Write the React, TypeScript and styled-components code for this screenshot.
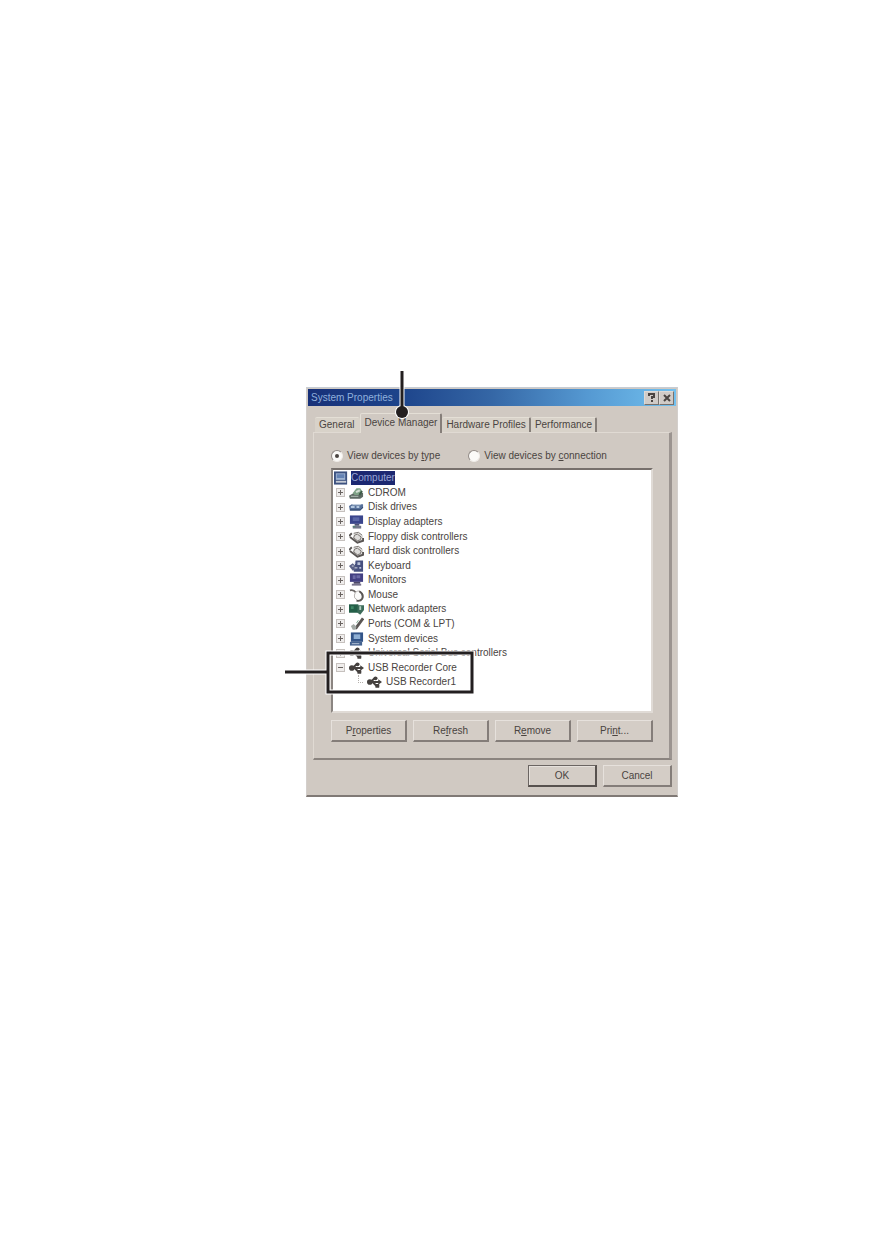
import React, { useState } from "react";
import styled, { createGlobalStyle, css } from "styled-components";

const GlobalStyle = createGlobalStyle`
  * { box-sizing: border-box; }
  body {
    margin: 0;
    background: #ffffff;
    color: #4a4441;
    font-family: "Liberation Sans", Arial, sans-serif;
    font-size: 10px;
    line-height: 12px;
  }
`;

const Page = styled.main`
  display: grid;
  grid-template-columns: minmax(0, 306fr) minmax(372px, 372fr) minmax(0, 215fr);
  min-height: 100vh;
  padding: 387px 0 64px;
`;

const Figure = styled.div`
  grid-column: 2;
  position: relative;
  align-self: start;
`;

const Dialog = styled.section`
  background: #d0c9c2;
  border: 1px solid #d3cfcc;
  border-top-color: #c5ccd5;
  border-bottom: 2px solid #807975;
  padding: 1px 1px 8px;
`;

const TitleBar = styled.header`
  display: flex;
  align-items: center;
  height: 17px;
  padding: 0 2px 0 3px;
  background: linear-gradient(90deg, #173078 0%, #1d448b 25%, #3567a6 50%, #5599d2 76%, #72c0ee 100%);
`;

const Title = styled.h1`
  flex: 1;
  margin: 0;
  font-size: 10px;
  font-weight: 400;
  color: #8fb0dc;
`;

const CaptionButton = styled.button`
  display: grid;
  place-items: center;
  width: 15px;
  height: 14px;
  padding: 0;
  color: #4a4441;
  background: #d0cbc7;
  border: 1px solid;
  border-color: #dedad6 #77716d #77716d #dedad6;
`;

const Body = styled.div`
  padding: 7px 4px 0 5px;
`;

const TabStrip = styled.div`
  display: flex;
  align-items: flex-end;
  height: 19px;
  padding-left: 2px;
`;

const Tab = styled.button<{ $active?: boolean }>`
  height: 15px;
  padding: 0 3px 0 4px;
  font: inherit;
  color: inherit;
  background: #d8d2c9;
  border: 0 solid;
  border-color: #e4dfd6 #857e79 transparent #e4dfd6;
  border-top-width: 1px;
  border-right-width: 2px;
  border-radius: 2px 2px 0 0;
  white-space: nowrap;
  &:first-child {
    border-right-color: #d8d2c9;
  }
  ${(p) =>
    p.$active &&
    css`
      position: relative;
      height: 20px;
      padding-bottom: 2px;
      margin-bottom: -1px;
      background: #d0c9c2;
      border-left-width: 1px;
    `}
`;

const Panel = styled.div`
  padding: 16px 16px 16px 17px;
  border: 1px solid #e0dad3;
  border-right: 3px solid #9b9490;
  border-bottom: 2px solid #8b847f;
`;

const Choices = styled.div`
  display: flex;
  gap: 28px;
  height: 13px;
  margin-bottom: 6px;
`;

const Choice = styled.label`
  display: flex;
  align-items: center;
  gap: 4px;
  white-space: nowrap;
`;

const Radio = styled.input`
  appearance: none;
  display: grid;
  place-items: center;
  width: 12px;
  height: 12px;
  margin: 0;
  background: #fbfaf8;
  border: 1px solid;
  border-color: #928b87 #f0ece8 #f0ece8 #928b87;
  border-radius: 50%;
  &:checked::before {
    content: "";
    width: 4px;
    height: 4px;
    background: #4a4441;
    border-radius: 50%;
  }
`;

const ListBox = styled.div`
  min-height: 243px;
  padding: 1px 1px 21px 1px;
  background: #ffffff;
  border: 2px solid;
  border-color: #77706c #e0dbd6 #e0dbd6 #8b8581;
`;

const Tree = styled.ul`
  display: grid;
  grid-auto-rows: 1fr;
  height: 219px;
  margin: 0;
  padding: 0;
  list-style: none;
`;

const Node = styled.li<{ $level: number }>`
  display: flex;
  align-items: center;
  gap: ${(p) => (p.$level === 0 ? 2 : 4)}px;
  padding-left: ${(p) => [0, 2, 24][p.$level]}px;
  white-space: nowrap;
`;

const Expander = styled.button`
  display: grid;
  place-items: center;
  width: 9px;
  height: 9px;
  padding: 0;
  color: #6a6461;
  background: #efedec;
  border: 1px solid #c6c1be;
`;

const Branch = styled.span`
  width: 5px;
  height: 8px;
  margin-bottom: 7px;
  border-left: 1px dotted #b5b0ac;
  border-bottom: 1px dotted #b5b0ac;
`;

const NodeLabel = styled.span<{ $selected?: boolean }>`
  ${(p) =>
    p.$selected &&
    css`
      padding: 1px 0;
      color: #98a4d4;
      background: #1c2871;
    `}
`;

const Actions = styled.div`
  display: grid;
  grid-template-columns: repeat(4, 1fr);
  gap: 6px;
  margin-top: 7px;
`;

const Footer = styled.footer`
  display: flex;
  justify-content: flex-end;
  gap: 6px;
  margin-top: 5px;
`;

const Button = styled.button<{ $default?: boolean; $wide?: boolean }>`
  width: ${(p) => (p.$wide ? "auto" : "69px")};
  height: 22px;
  padding: 0;
  font: inherit;
  color: inherit;
  background: #d4cdc6;
  border: 1px solid;
  border-color: #e6e1dc #847d79 #847d79 #e6e1dc;
  border-right-width: 2px;
  border-bottom-width: 2px;
  ${(p) =>
    p.$default &&
    css`
      border-color: #6b6562 #57514e #57514e #6b6562;
      box-shadow: inset 1px 1px #e6e1dc;
    `}
`;

const ink = "#231f20";

const TabPointer = styled.svg`
  position: absolute;
  left: 88px;
  top: -16px;
  width: 15px;
  height: 50px;
  pointer-events: none;
`;

const RowPointer = styled.svg`
  position: absolute;
  left: -21px;
  top: 263px;
  width: 190px;
  height: 45px;
  pointer-events: none;
`;

type IconName =
  | "computer" | "cdrom" | "drive" | "display" | "controller" | "keyboard"
  | "monitor" | "mouse" | "network" | "port" | "system" | "usb";

const shapes: Record<IconName, React.ReactNode> = {
  computer: (
    <>
      <path d="M0 0h14v14H0z" fill="#3d5280" />
      <path d="M2 2h10v7H2z" fill="#9fb4d2" />
      <path d="M3 3h8v4H3z" fill="#6583b4" />
      <path d="M2 10h11v2H2z" fill="#c7ccd5" />
    </>
  ),
  cdrom: (
    <>
      <path d="M0 10l5-3h10v4l-3 2H1z" fill="#5d6963" />
      <path d="M2 10h8v1H2z" fill="#b9c7bd" />
      <path d="M4 7l4-5h4l2 3-3 4H6z" fill="#7ea286" />
      <path d="M7 5l4-2 1 2-4 2z" fill="#d3dfd4" />
      <path d="M11 9l3-4" stroke="#3d5a47" strokeWidth="2" />
    </>
  ),
  drive: (
    <>
      <path d="M0 6l3-2h12v4l-3 3H1z" fill="#56709a" />
      <path d="M2 6h4v2H2zM8 6h3v2H8z" fill="#b4c8df" />
      <path d="M4 4h9l-1 1H3z" fill="#dbe5ee" />
      <path d="M1 10h11l3-3" fill="none" stroke="#33476b" />
    </>
  ),
  display: (
    <>
      <path d="M1 0h14v9H1z" fill="#3a458c" />
      <path d="M4 2h7v4H4z" fill="#5b68a8" />
      <path d="M6 9h5v2H6z" fill="#4d5375" />
      <path d="M4 11h9v3H4z" fill="#73778b" />
      <path d="M4 12h3" stroke="#4d8a6c" />
    </>
  ),
  controller: (
    <>
      <path d="M5 3l5-1 5 4v5l-6 2-5-4z" fill="#dedddb" />
      <path d="M5 3l5-1 4 3M6 5l3-1 4 3-1 3-3 1-4-3z" fill="none" stroke="#77736f" />
      <path d="M0 6l3-3M1 7l8 6 6-2V8" fill="none" stroke="#5a5654" strokeWidth="2" />
    </>
  ),
  keyboard: (
    <>
      <path d="M7 1h8v12H5z" fill="#46507f" />
      <path d="M9 3h3v3H9zM11 8h2v2h-2z" fill="#b7bfd8" />
      <path d="M0 7l4-3 3 3v4l-3 1z" fill="#596087" />
      <path d="M3 7h2M6 9h3M5 4h2" stroke="#dde0e9" />
    </>
  ),
  monitor: (
    <>
      <path d="M1 0h14v9H1z" fill="#423f82" />
      <path d="M4 2h3v4H4zM8 2h4v3H8z" fill="#6b6aa6" />
      <path d="M5 9h7v2H5z" fill="#4d4968" />
      <path d="M3 11h10v2H3z" fill="#77738b" />
    </>
  ),
  mouse: (
    <>
      <path d="M1 2q4-1 6 2" fill="none" stroke="#6a6664" strokeWidth="2" />
      <path d="M7 4q4-3 7 1t-1 8q-4 1-7-3-1-3 1-6z" fill="#fbfbfa" stroke="#b3afac" />
      <path d="M11 3q5 3 3 8-2 3-6 2" fill="none" stroke="#5a5654" strokeWidth="2" />
    </>
  ),
  network: (
    <>
      <path d="M0 2h10v9H0z" fill="#245f48" />
      <path d="M2 4h3v3H2z" fill="#3f8766" />
      <path d="M9 3h7v5l-4 5-3-2z" fill="#3d6c5a" />
      <path d="M11 4h2v4h-2z" fill="#b4cfc2" />
    </>
  ),
  port: (
    <>
      <path d="M15 1L7 12" stroke="#5a5654" strokeWidth="3" />
      <path d="M2 9l3-2 3 3-1 3H4z" fill="#a3aaa6" />
      <path d="M10 3l-2 3" stroke="#7da68f" />
    </>
  ),
  system: (
    <>
      <path d="M2 0h13v10H2z" fill="#335488" />
      <path d="M5 2h7v5H5z" fill="#8fafd4" />
      <path d="M1 10h13v4H1z" fill="#45628f" />
      <path d="M3 12h8" stroke="#bac9db" />
    </>
  ),
  usb: (
    <>
      <path d="M1 7h12M4 7l4-4h3M6 7l4 4h3" fill="none" stroke="#45413f" strokeWidth="2" />
      <circle cx="3" cy="7" r="3" fill="#45413f" />
      <circle cx="9" cy="3" r="2" fill="#45413f" />
      <path d="M9 9h4v4H9zM12 4l4 3-4 3z" fill="#45413f" />
    </>
  ),
};

const Glyph = styled.svg`
  flex: none;
  width: 15px;
  height: 14px;
`;

const Icon = ({ name }: { name: IconName }) => (
  <Glyph viewBox="0 0 16 14" aria-hidden="true">
    {shapes[name]}
  </Glyph>
);

const devices: { label: string; icon: IconName; level: number; open?: boolean }[] = [
  { label: "Computer", icon: "computer", level: 0 },
  { label: "CDROM", icon: "cdrom", level: 1 },
  { label: "Disk drives", icon: "drive", level: 1 },
  { label: "Display adapters", icon: "display", level: 1 },
  { label: "Floppy disk controllers", icon: "controller", level: 1 },
  { label: "Hard disk controllers", icon: "controller", level: 1 },
  { label: "Keyboard", icon: "keyboard", level: 1 },
  { label: "Monitors", icon: "monitor", level: 1 },
  { label: "Mouse", icon: "mouse", level: 1 },
  { label: "Network adapters", icon: "network", level: 1 },
  { label: "Ports (COM & LPT)", icon: "port", level: 1 },
  { label: "System devices", icon: "system", level: 1 },
  { label: "Universal Serial Bus controllers", icon: "usb", level: 1 },
  { label: "USB Recorder Core", icon: "usb", level: 1, open: true },
  { label: "USB Recorder1", icon: "usb", level: 2 },
];

export default function App() {
  const [view, setView] = useState("type");
  return (
    <>
      <GlobalStyle />
      <Page>
        <Figure>
          <Dialog aria-label="System Properties">
            <TitleBar>
              <Title>System Properties</Title>
              <CaptionButton aria-label="Help">
                <svg width="8" height="9" viewBox="0 0 8 9" fill="none" stroke="currentColor" strokeWidth="2">
                  <path d="M1 3V1h5v3H4v2M4 7v2" />
                </svg>
              </CaptionButton>
              <CaptionButton aria-label="Close">
                <svg width="8" height="8" viewBox="0 0 8 8" stroke="currentColor" strokeWidth="2">
                  <path d="M1 1l6 6M7 1L1 7" />
                </svg>
              </CaptionButton>
            </TitleBar>
            <Body>
              <TabStrip role="tablist">
                <Tab role="tab">General</Tab>
                <Tab role="tab" aria-selected="true" $active>Device Manager</Tab>
                <Tab role="tab">Hardware Profiles</Tab>
                <Tab role="tab">Performance</Tab>
              </TabStrip>
              <Panel role="tabpanel">
                <Choices>
                  <Choice>
                    <Radio type="radio" name="view" checked={view === "type"} onChange={() => setView("type")} />
                    <span>View devices by <u>t</u>ype</span>
                  </Choice>
                  <Choice>
                    <Radio type="radio" name="view" checked={view === "connection"} onChange={() => setView("connection")} />
                    <span>View devices by <u>c</u>onnection</span>
                  </Choice>
                </Choices>
                <ListBox>
                  <Tree>
                    {devices.map((d) => (
                      <Node key={d.label} $level={d.level}>
                        {d.level === 1 && (
                          <Expander aria-label={`${d.open ? "Collapse" : "Expand"} ${d.label}`}>
                            <svg width="5" height="5" viewBox="0 0 5 5" stroke="currentColor">
                              <path d={d.open ? "M0 2.5h5" : "M0 2.5h5M2.5 0v5"} />
                            </svg>
                          </Expander>
                        )}
                        {d.level === 2 && <Branch />}
                        <Icon name={d.icon} />
                        <NodeLabel $selected={d.level === 0}>{d.label}</NodeLabel>
                      </Node>
                    ))}
                  </Tree>
                </ListBox>
                <Actions>
                  <Button $wide>P<u>r</u>operties</Button>
                  <Button $wide>Re<u>f</u>resh</Button>
                  <Button $wide>R<u>e</u>move</Button>
                  <Button $wide>Pri<u>n</u>t...</Button>
                </Actions>
              </Panel>
              <Footer>
                <Button $default>OK</Button>
                <Button>Cancel</Button>
              </Footer>
            </Body>
          </Dialog>
          <TabPointer viewBox="0 0 15 50" aria-hidden="true">
            <path d="M8 0v41" stroke="#fff" strokeWidth="5" />
            <circle cx="8" cy="41" r="7" fill="#fff" />
            <path d="M8 0v41" stroke={ink} strokeWidth="3" />
            <circle cx="8" cy="41" r="6" fill={ink} />
          </TabPointer>
          <RowPointer viewBox="0 0 190 45" fill="none" aria-hidden="true">
            <path d="M0 22h43M43 3h144v39H43z" stroke="#fff" strokeWidth="5" />
            <path d="M0 22h43M43 3h144v39H43z" stroke={ink} strokeWidth="3" />
          </RowPointer>
        </Figure>
      </Page>
    </>
  );
}
